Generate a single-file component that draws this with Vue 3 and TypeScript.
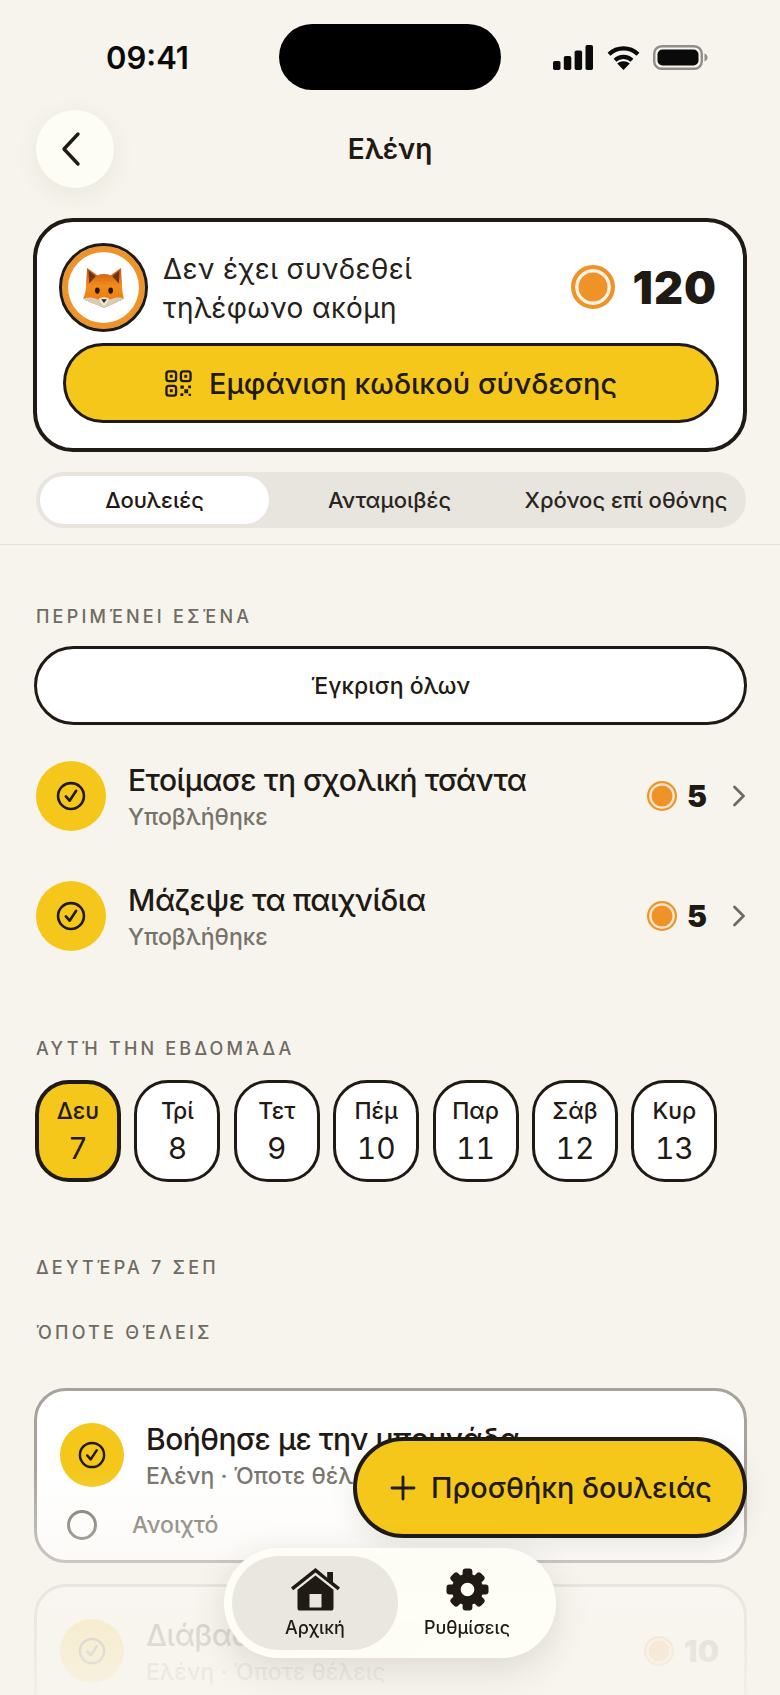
<script setup lang="ts">
interface Chore { title: string; sub: string; coins: number }
interface Day { name: string; num: number; active?: boolean }

const pending: Chore[] = [
  { title: 'Ετοίμασε τη σχολική τσάντα', sub: 'Υποβλήθηκε', coins: 5 },
  { title: 'Μάζεψε τα παιχνίδια', sub: 'Υποβλήθηκε', coins: 5 },
]

const days: Day[] = [
  { name: 'Δευ', num: 7, active: true },
  { name: 'Τρί', num: 8 },
  { name: 'Τετ', num: 9 },
  { name: 'Πέμ', num: 10 },
  { name: 'Παρ', num: 11 },
  { name: 'Σάβ', num: 12 },
  { name: 'Κυρ', num: 13 },
]

const tabs = ['Δουλειές', 'Ανταμοιβές', 'Χρόνος επί οθόνης']
const gearTeeth = [0, 45, 90, 135, 180, 225, 270, 315]
</script>

<template>
  <div class="screen">
    <header class="status">
      <span class="time">09:41</span>
      <div class="island"></div>
      <div class="status-icons">
        <svg width="40" height="25" viewBox="0 0 40 25"><rect x="0" y="16" width="7.500" height="9" rx="1.800" /><rect x="10.800" y="11" width="7.500" height="14" rx="1.800" /><rect x="21.600" y="5.500" width="7.500" height="19.500" rx="1.800" /><rect x="32.500" y="0" width="7.500" height="25" rx="1.800" /></svg>
        <svg width="33" height="25" viewBox="0 0 33 25" fill="none" stroke="#0a0a0a" stroke-width="4.200"><path d="M2 9.200C10.200 1.400 22.800 1.400 31 9.200" /><path d="M8 15.200C12.800 10.800 20.200 10.800 25 15.200" /><path d="M16.500 25 10.200 18.500c3.600-3 9-3 12.600 0z" fill="#0a0a0a" stroke="none" /></svg>
        <svg width="55" height="25" viewBox="0 0 55 25"><rect x="1.200" y="1.200" width="47.600" height="22.600" rx="7.500" fill="none" stroke="#8f8d85" stroke-width="2.400" /><rect x="4.500" y="4.500" width="41" height="16" rx="5" /><path d="M51.500 8.500c1.800.6 3 2.200 3 4s-1.200 3.400-3 4z" fill="#8f8d85" /></svg>
      </div>
    </header>

    <nav class="topbar">
      <button class="back">
        <svg width="30" height="38" viewBox="0 0 30 38" fill="none"><path d="M21 4 7 19l14 15" stroke="#1f1a14" stroke-width="3.400" stroke-linecap="round" stroke-linejoin="round" /></svg>
      </button>
      <h1 class="title">Ελένη</h1>
    </nav>

    <section class="profile">
      <div class="profile-top">
        <div class="avatar">
          <svg width="41" height="41" viewBox="0 0 40 40">
            <defs>
              <linearGradient id="fur" x1="0" y1="0" x2="0" y2="1"><stop offset="0" stop-color="#c9560f" /><stop offset="0.45" stop-color="#f28c1c" /><stop offset="1" stop-color="#e8740e" /></linearGradient>
            </defs>
            <path d="M4 1 14 8C18 6.500 23 6.500 27 8L37 1 38 16C38 22 39 28 40 31 36 33 30 36 27 37L20.500 40 14 37C10 36 4 33 0 31 2 28 3 22 3 16z" fill="url(#fur)" />
            <path d="M5.500 3.500 12.500 9 6 16zM35.500 3.500 28.500 9 35 16z" fill="#6e3412" />
            <path d="M0 31C5 29 10 29.500 14 31.500L20.500 35 27 31.500C31 29.500 36 29 40 31 36 33 30 36 27 37L20.500 40 14 37C10 36 4 33 0 31z" fill="#d9cbb8" />
            <path d="M15 31.500C17 30 18.500 29.500 20.500 29.500S24 30 26 31.500L20.500 38.500z" fill="#f0e6d8" />
            <ellipse cx="14" cy="23" rx="2.300" ry="3" fill="#2a1708" />
            <ellipse cx="27" cy="23" rx="2.300" ry="3" fill="#2a1708" />
            <path d="M17.800 31.500h5.400L20.500 35z" fill="#33231a" />
          </svg>
        </div>
        <p class="link-text">Δεν έχει συνδεθεί<br />τηλέφωνο ακόμη</p>
        <div class="balance">
          <span class="coin coin-lg"></span>
          <span class="balance-num">120</span>
        </div>
      </div>
      <button class="code-btn">
        <svg width="27" height="27" viewBox="0 0 28 28" fill="none" stroke="#1f1a14" stroke-width="2.400">
          <rect x="1.500" y="1.500" width="10" height="10" rx="2.500" /><rect x="16.500" y="1.500" width="10" height="10" rx="2.500" /><rect x="1.500" y="16.500" width="10" height="10" rx="2.500" />
          <rect x="5" y="5" width="3" height="3" fill="#1f1a14" stroke="none" /><rect x="20" y="5" width="3" height="3" fill="#1f1a14" stroke="none" /><rect x="5" y="20" width="3" height="3" fill="#1f1a14" stroke="none" />
          <path d="M16 16h3.500v3.500H16zM24 16h3v3h-3zM20 20h4v4h-4zM16 24h3v3h-3zM24.500 24.500h2.500v2.500h-2.500z" fill="#1f1a14" stroke="none" />
        </svg>
        <span>Εμφάνιση κωδικού σύνδεσης</span>
      </button>
    </section>

    <div class="tabs">
      <div v-for="(t, i) in tabs" :key="t" class="tab" :class="{ active: i === 0 }">{{ t }}</div>
    </div>
    <div class="divider"></div>

    <h2 class="label label-first">ΠΕΡΙΜΈΝΕΙ ΕΣΈΝΑ</h2>
    <button class="approve">Έγκριση όλων</button>

    <div class="pending">
      <div v-for="c in pending" :key="c.title" class="row">
        <div class="check-badge">
          <svg width="30" height="30" viewBox="0 0 32 32" fill="none" stroke="#1f1a14" stroke-linecap="round" stroke-linejoin="round"><circle cx="16" cy="16" r="13.800" stroke-width="2.800" /><path d="m10.500 16.500 4 4.500 7-10.500" stroke-width="2.800" /></svg>
        </div>
        <div class="row-text">
          <div class="row-title">{{ c.title }}</div>
          <div class="row-sub">{{ c.sub }}</div>
        </div>
        <span class="coin coin-sm"></span>
        <span class="row-num">{{ c.coins }}</span>
        <svg class="chev" width="14" height="24" viewBox="0 0 14 24" fill="none"><path d="m2.500 3 9 9-9 9" stroke="#6f6b62" stroke-width="2.800" stroke-linecap="round" stroke-linejoin="round" /></svg>
      </div>
    </div>

    <h2 class="label label-week">ΑΥΤΉ ΤΗΝ ΕΒΔΟΜΆΔΑ</h2>
    <div class="week">
      <div v-for="d in days" :key="d.num" class="day" :class="{ active: d.active }">
        <span class="day-name">{{ d.name }}</span>
        <span class="day-num">{{ d.num }}</span>
      </div>
    </div>

    <h2 class="label label-date">ΔΕΥΤΈΡΑ 7 ΣΕΠ</h2>
    <h2 class="label label-any">ΌΠΟΤΕ ΘΈΛΕΙΣ</h2>

    <div class="chore-card">
      <div class="chore-main">
        <div class="check-badge small">
          <svg width="28" height="28" viewBox="0 0 32 32" fill="none" stroke="#1f1a14" stroke-linecap="round" stroke-linejoin="round"><circle cx="16" cy="16" r="13.800" stroke-width="2.800" /><path d="m10.500 16.500 4 4.500 7-10.500" stroke-width="2.800" /></svg>
        </div>
        <div class="row-text">
          <div class="row-title">Βοήθησε με την μπουγάδα</div>
          <div class="row-sub">Ελένη · Όποτε θέλεις</div>
        </div>
      </div>
      <div class="chore-state">
        <span class="radio"></span>
        <span>Ανοιχτό</span>
      </div>
    </div>

    <div class="chore-card faded">
      <div class="chore-main">
        <div class="check-badge small">
          <svg width="28" height="28" viewBox="0 0 32 32" fill="none" stroke="#1f1a14" stroke-linecap="round" stroke-linejoin="round"><circle cx="16" cy="16" r="13.800" stroke-width="2.800" /><path d="m10.500 16.500 4 4.500 7-10.500" stroke-width="2.800" /></svg>
        </div>
        <div class="row-text">
          <div class="row-title">Διάβασε ένα βιβλίο</div>
          <div class="row-sub">Ελένη · Όποτε θέλεις</div>
        </div>
        <span class="coin coin-sm"></span>
        <span class="row-num">10</span>
      </div>
    </div>

    <div class="bottom-fade"></div>

    <button class="fab">
      <svg width="26" height="26" viewBox="0 0 26 26" fill="none"><path d="M13 2v22M2 13h22" stroke="#1f1a14" stroke-width="2.800" stroke-linecap="round" /></svg>
      <span>Προσθήκη δουλειάς</span>
    </button>

    <div class="dock">
      <div class="dock-item active">
        <svg width="49" height="43" viewBox="0 0 49 43"><path d="M24.500 0 0 19.500l2.200 2.800L24.500 4.500l22.300 17.800 2.200-2.800-7-5.600V4h-5.800v5.700z" fill="#1f1a14" /><path d="M24.500 7.500 6.500 21.800V40a2.600 2.600 0 0 0 2.600 2.600h30.800a2.600 2.600 0 0 0 2.600-2.600V21.800zM18.500 26h12v13.500h-12z" fill="#1f1a14" fill-rule="evenodd" /></svg>
        <span>Αρχική</span>
      </div>
      <div class="dock-item second">
        <svg width="43" height="43" viewBox="-22 -22 44 44">
          <circle r="11.500" fill="none" stroke="#1f1a14" stroke-width="9" />
          <rect v-for="a in gearTeeth" :key="a" x="-5" y="-21.500" width="10" height="10" rx="3" fill="#1f1a14" :transform="`rotate(${a})`" />
        </svg>
        <span>Ρυθμίσεις</span>
      </div>
    </div>
  </div>
</template>

<style>
html, body { background: #f7f4ed; }
</style>

<style scoped>
.screen {
  position: relative;
  width: 780px;
  height: 1695px;
  overflow: hidden;
  background: #f7f4ed;
  color: #1f1a14;
  font-family: Inter, "Noto Sans", sans-serif;
}
button { font-family: inherit; color: inherit; cursor: pointer; }

.status {
  display: flex;
  align-items: center;
  height: 66px;
  margin-top: 24px;
  padding: 0 58px 0 106px;
}
.time { width: 173px; font-size: 31px; font-weight: 600; color: #0a0a0a; }
.island { width: 222px; height: 66px; border-radius: 33px; background: #000; }
.status-icons { display: flex; align-items: center; gap: 13.500px; margin-left: 52px; fill: #0a0a0a; }

.topbar { display: flex; align-items: center; height: 78px; margin: 20px 0 0 36px; position: relative; }
.back {
  width: 78px;
  height: 78px;
  border: none;
  border-radius: 50%;
  background: #fdfcf5;
  box-shadow: 0 6px 24px rgba(60, 50, 30, 0.07);
  display: flex;
  align-items: center;
  justify-content: center;
  padding: 0 6px 0 0;
}
.title { position: absolute; left: 300px; width: 108px; margin: 0; text-align: center; font-size: 28px; font-weight: 600; }

.profile {
  box-sizing: border-box;
  margin: 30px 33px 0;
  height: 234px;
  padding: 21px 26px 0;
  background: #fff;
  border: 4px solid #1f1a14;
  border-radius: 40px;
}
.profile-top { display: flex; align-items: center; height: 88px; }
.avatar {
  box-sizing: border-box;
  width: 89px;
  height: 89px;
  margin-left: -4px;
  border-radius: 50%;
  border: 3px solid #1f1a14;
  box-shadow: inset 0 0 0 6px #ef9329;
  background: #fff;
  display: flex;
  align-items: center;
  justify-content: center;
  flex: none;
}
.link-text { margin: 3px 0 0 15px; flex: 1; font-size: 28px; line-height: 39px; letter-spacing: 0.4px; color: #26211b; }
.balance { display: flex; align-items: center; gap: 18px; margin-right: 0; }
.balance-num { font-size: 45px; font-weight: 900; letter-spacing: 1px; }
.coin { display: inline-block; box-sizing: border-box; border-radius: 50%; background: #ef9329; flex: none; }
.coin-lg { width: 44px; height: 44px; border: 4px solid #ef9329; box-shadow: inset 0 0 0 3.500px #fdf3e4; }
.coin-sm { width: 30px; height: 30px; border: 2.500px solid #ef9329; box-shadow: inset 0 0 0 2.500px #fbe6cd; }

.code-btn {
  width: calc(100% + 2px);
  height: 80px;
  margin-top: 12px;
  border: 3px solid #1f1a14;
  border-radius: 40px;
  background: #f5c71a;
  display: flex;
  align-items: center;
  justify-content: center;
  gap: 17px;
  font-size: 29px;
  font-weight: 500;
  padding: 0;
}

.tabs {
  display: flex;
  height: 56px;
  margin: 20px 34px 0 36px;
  padding: 4px;
  box-sizing: border-box;
  border-radius: 28px;
  background: #e7e5de;
}
.tab { flex: 1; display: flex; align-items: center; justify-content: center; font-size: 22px; font-weight: 500; color: #2a251f; white-space: nowrap; }
.tab.active { flex: none; width: 229px; background: #fff; border-radius: 24px; color: #1f1a14; }
.tab:nth-child(3) { flex: none; width: 232px; }
.divider { height: 1px; margin-top: 16px; background: #e4e1d9; }

.label { margin: 0 0 0 36px; font-size: 18px; line-height: 22px; font-weight: 500; letter-spacing: 3.200px; color: #6f6b62; }
.label-first { margin-top: 61px; }
.label-week { margin-top: 87px; }
.label-date { margin-top: 75px; }
.label-any { margin-top: 43px; }

.approve {
  display: block;
  width: 713px;
  height: 79px;
  margin: 18px 0 0 34px;
  border: 3px solid #1f1a14;
  border-radius: 40px;
  background: #fff;
  font-size: 23px;
  font-weight: 500;
}

.pending { margin: 36px 34px 0 36px; display: flex; flex-direction: column; gap: 50px; }
.row { display: flex; align-items: center; height: 70px; }
.check-badge { width: 70px; height: 70px; border-radius: 50%; background: #f5c71a; display: flex; align-items: center; justify-content: center; flex: none; }
.check-badge.small { width: 64px; height: 64px; }
.row-text { flex: 1; margin-left: 22px; padding-top: 2px; }
.row-title { font-size: 30px; line-height: 36px; font-weight: 450; letter-spacing: -0.5px; white-space: nowrap; }
.row-sub { font-size: 23px; line-height: 30px; margin-top: 4px; font-weight: 500; color: #77736a; white-space: nowrap; }
.row-num { font-size: 30px; font-weight: 900; margin-left: 10px; }
.chev { margin-left: 25px; }

.week { display: flex; gap: 13.400px; margin: 20px 0 0 35px; }
.day {
  box-sizing: border-box;
  width: 86px;
  height: 102px;
  border: 3px solid #1f1a14;
  border-radius: 34px;
  background: #fff;
  display: flex;
  flex-direction: column;
  align-items: center;
  padding-top: 13px;
}
.day.active { background: #f5c71a; border-width: 4px; padding-top: 12px; }
.day-name { font-size: 23px; line-height: 30px; font-weight: 500; }
.day-num { font-size: 30px; line-height: 40px; margin-top: 2px; font-variant-numeric: tabular-nums; }

.chore-card {
  box-sizing: border-box;
  height: 175px;
  margin: 44px 33px 0 34px;
  padding: 28px 23px 0;
  background: #fff;
  border: 3px solid #a6a39a;
  border-radius: 32px;
}
.chore-main { display: flex; align-items: center; }
.chore-state { display: flex; align-items: center; gap: 35px; margin: 19px 0 0 7px; font-size: 23px; font-weight: 500; color: #77736a; }
.radio { width: 30px; height: 30px; box-sizing: border-box; border: 3px solid #77736a; border-radius: 50%; }
.faded { margin-top: 21px; opacity: 0.4; }
.faded .row-num { font-size: 30px; color: #6f6b62; margin-right: 2px; }

.bottom-fade {
  position: absolute;
  left: 0;
  right: 0;
  bottom: 0;
  height: 225px;
  background: linear-gradient(to bottom, rgba(247, 244, 237, 0), rgba(247, 244, 237, 0.55) 50%, rgba(247, 244, 237, 0.85));
  pointer-events: none;
}

.fab {
  position: absolute;
  left: 353px;
  top: 1437px;
  width: 394px;
  height: 101px;
  border: 4px solid #1f1a14;
  border-radius: 51px;
  background: #f5c71a;
  display: flex;
  align-items: center;
  justify-content: center;
  gap: 15px;
  font-size: 28.800px;
  font-weight: 500;
  padding: 0 0 0 2px;
  box-shadow: 0 8px 24px rgba(60, 50, 30, 0.1);
}

.dock {
  position: absolute;
  left: 224px;
  top: 1548px;
  width: 332px;
  height: 110px;
  box-sizing: border-box;
  padding: 8px;
  display: flex;
  border-radius: 55px;
  background: rgba(254, 253, 246, 0.95);
  backdrop-filter: blur(8px);
  box-shadow: 0 10px 36px rgba(60, 50, 30, 0.14);
}
.dock-item { flex: 1; display: flex; flex-direction: column; align-items: center; justify-content: center; gap: 6px; font-size: 18px; font-weight: 500; border-radius: 47px; }
.dock-item.active { flex: none; width: 166px; background: #e9e7e0; }
.dock-item.second { padding-right: 12px; }
</style>
